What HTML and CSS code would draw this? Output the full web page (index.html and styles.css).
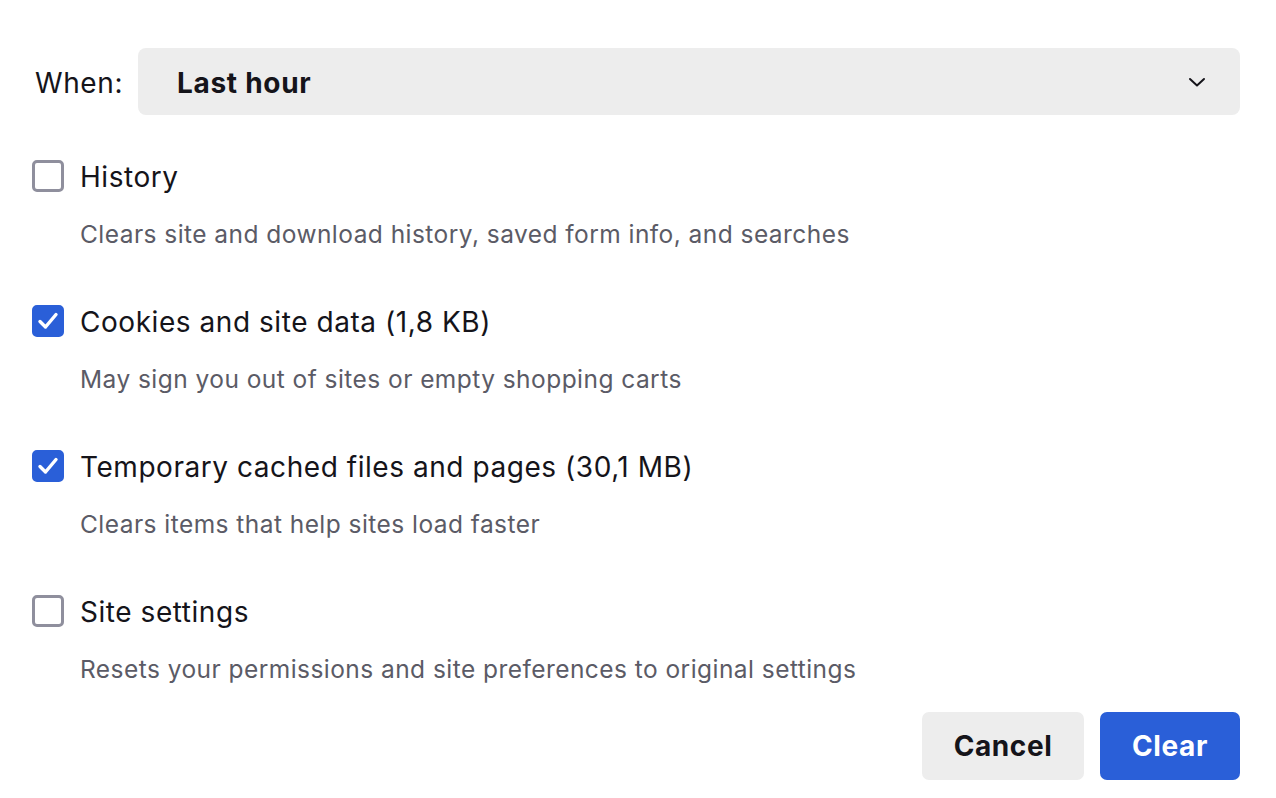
FILE: index.html
```html
<!DOCTYPE html>
<html>
<head>
<meta charset="utf-8">
<link rel="stylesheet" href="styles.css">
</head>
<body>
<div class="dialog">
  <div class="when-row">
    <span class="when-label">When:</span>
    <div class="select">
      <span class="select-value">Last hour</span>
      <svg class="chevron" width="18" height="12" viewBox="0 0 18 12"><path d="M2 3 L9 9.5 L16 3" fill="none" stroke="#15141a" stroke-width="2" stroke-linecap="round" stroke-linejoin="round"/></svg>
    </div>
  </div>

  <div class="items">
    <div class="item">
      <div class="row"><span class="box"></span><span class="label">History</span></div>
      <div class="desc">Clears site and download history, saved form info, and searches</div>
    </div>
    <div class="item">
      <div class="row"><span class="box checked"><svg width="24" height="24" viewBox="0 0 24 24"><path d="M4 12.5 L9.5 18 L20 5.5" fill="none" stroke="#fff" stroke-width="3.4" stroke-linecap="round" stroke-linejoin="round"/></svg></span><span class="label">Cookies and site data (1,8 KB)</span></div>
      <div class="desc">May sign you out of sites or empty shopping carts</div>
    </div>
    <div class="item">
      <div class="row"><span class="box checked"><svg width="24" height="24" viewBox="0 0 24 24"><path d="M4 12.5 L9.5 18 L20 5.5" fill="none" stroke="#fff" stroke-width="3.4" stroke-linecap="round" stroke-linejoin="round"/></svg></span><span class="label">Temporary cached files and pages (30,1 MB)</span></div>
      <div class="desc">Clears items that help sites load faster</div>
    </div>
    <div class="item last">
      <div class="row"><span class="box"></span><span class="label">Site settings</span></div>
      <div class="desc">Resets your permissions and site preferences to original settings</div>
    </div>
  </div>

  <div class="buttons">
    <button class="btn cancel">Cancel</button>
    <button class="btn primary">Clear</button>
  </div>
</div>
</body>
</html>
```

FILE: styles.css
```css
html, body {
  margin: 0;
  padding: 0;
  background: #ffffff;
}
body {
  font-family: Inter, "Noto Sans", "Liberation Sans", sans-serif;
  color: #15141a;
}
.dialog {
  width: 1276px;
  height: 798px;
  box-sizing: border-box;
  padding: 48px 36px 0 32px;
}
.when-row {
  display: flex;
  align-items: center;
  height: 67px;
}
.when-label {
  font-size: 28px;
  letter-spacing: 0.6px;
  margin-left: 3px;
  width: 103px;
  padding-top: 2px;
}
.select {
  flex: 1;
  height: 67px;
  background: #ededed;
  border-radius: 8px;
  display: flex;
  align-items: center;
  justify-content: space-between;
  padding: 0 34px 0 39px;
  box-sizing: border-box;
}
.select-value {
  font-size: 28px;
  font-weight: 700;
  letter-spacing: 0.7px;
  padding-top: 2px;
}
.chevron {
  display: block;
}
.items {
  margin-top: 45px;
}
.item {
  height: 145px;
}
.item.last {
  height: 117px;
}
.row {
  display: flex;
  align-items: center;
  height: 32px;
}
.box {
  width: 32px;
  height: 32px;
  box-sizing: border-box;
  border: 3px solid #8f8f9d;
  border-radius: 5px;
  display: flex;
  align-items: center;
  justify-content: center;
  margin-right: 16px;
}
.box.checked {
  background: #2a5fd8;
  border-color: #2a5fd8;
}
.box svg {
  display: block;
}
.label {
  font-size: 28px;
  letter-spacing: 0.55px;
  line-height: 32px;
  padding-top: 2px;
}
.desc {
  margin-top: 26px;
  margin-left: 48px;
  font-size: 24.5px;
  letter-spacing: 0.45px;
  line-height: 32px;
  color: #5b5b66;
}
.buttons {
  display: flex;
  justify-content: flex-end;
  gap: 16px;
}
.btn {
  height: 68px;
  border: none;
  border-radius: 7px;
  font-family: Inter, "Noto Sans", "Liberation Sans", sans-serif;
  font-size: 28px;
  font-weight: 700;
  letter-spacing: 0.6px;
  padding: 0;
}
.cancel {
  width: 162px;
  background: #ededed;
  color: #15141a;
}
.primary {
  width: 140px;
  background: #2a5fd8;
  color: #ffffff;
}
```
